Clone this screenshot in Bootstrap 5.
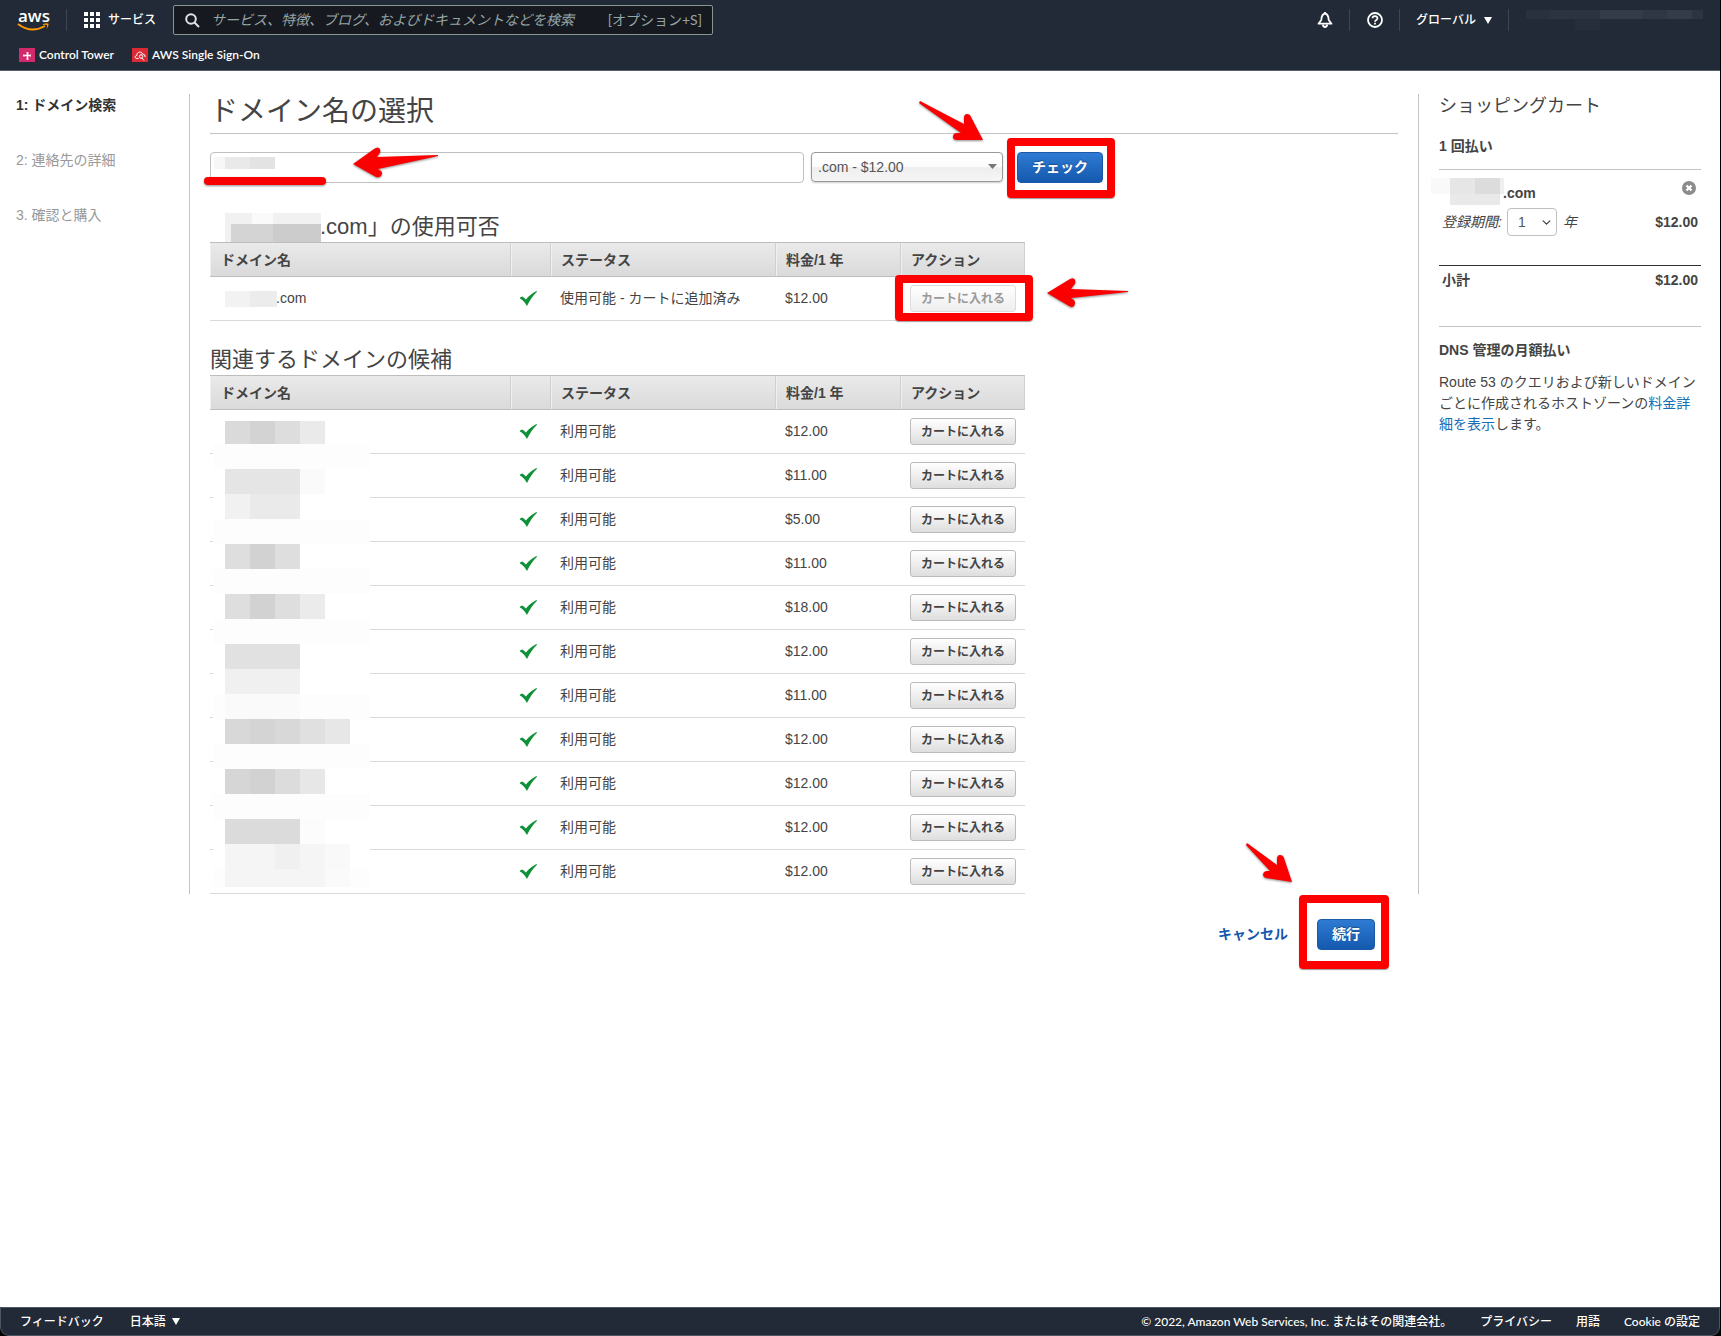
<!DOCTYPE html>
<html lang="ja">
<head>
<meta charset="utf-8">
<meta name="viewport" content="width=device-width, initial-scale=1">
<title>Route 53 - ドメイン名の選択</title>
<link href="https://cdn.jsdelivr.net/npm/bootstrap@5.3.0/dist/css/bootstrap.min.css" rel="stylesheet">
<style>
:root { --navy:#212a36; --red:#fe0000; --ink:#444; --rule:#c4c4c4; }
body { font:14px/21px "Liberation Sans","Noto Sans CJK JP",sans-serif; color:var(--ink); background:#fff; border-right:1px solid #000; }
a { text-decoration:none; }
.topbar, .bottombar { background:var(--navy); color:#fff; font-family:Lato,"Noto Sans CJK JP",sans-serif; font-weight:600; font-size:12px; line-height:18px; }
.topbar { border-bottom:1px solid #56606c; }
.topbar a, .bottombar a, .topbar button, .bottombar button { color:#fff; }
.topbar .jp, .bottombar .jp { font-weight:500; }
.toprow { height:40px; }
.favrow { height:30px; padding-left:19px; gap:18px; }
.plain { background:none; border:0; padding:0; font:inherit; }
.vsep { width:1px; height:22px; background:#3d4752; }
.svc { gap:8px; padding:0 17px; }
.searchbox { width:540px; height:30px; background:#16191f; border:1px solid #879596; border-radius:2px; padding:0 10px 0 11px; color:#95a5a6; font-size:14px; font-weight:400; }
.searchbox input { background:none; border:0; outline:0; color:inherit; min-width:0; padding:0 0 0 11px; }
.searchbox input::placeholder { color:#95a5a6; font-style:italic; opacity:1; }
.caret { width:0; height:0; border:4px solid transparent; border-top:7px solid #fff; border-bottom:0; }
.logo { overflow:visible; }
.steps { width:189px; padding:24px 16px 0; }
.steps li { margin-bottom:34px; color:#999; }
.steps li.now { color:#333; font-weight:700; }
.mainpane { border-left:1px solid var(--rule); padding:0 20px; height:800px; }
.mainwrap { padding-top:23px; }
h1 { font-size:28px; line-height:34px; margin:0 0 18px; padding:1px 0 4px; border-bottom:1px solid var(--rule); font-weight:400; }
h2 { font-size:22px; line-height:34px; height:32px; margin:0; font-weight:400; }
.searchform { width:893px; height:31px; margin-bottom:27px; }
.searchform input { height:31px; border:1px solid #c0c0c0; border-radius:4px; margin-right:7px; }
.tld { width:192px; height:30px; border:1px solid #999; border-radius:4px; padding:0 6px; color:#555; font-size:14px; margin-right:14px;
  background:url("data:image/svg+xml,%3Csvg xmlns='http://www.w3.org/2000/svg' viewBox='0 0 9 5'%3E%3Cpath d='M0 0h9L4.5 5z' fill='%23777'/%3E%3C/svg%3E") no-repeat right 5px top 11px/9px 5px, linear-gradient(#fff 0,#fcfcfc 50%,#eee 52%,#f6f6f6 100%); box-shadow:0 1px 2px rgba(0,0,0,.2); appearance:none; }
.bluebtn { height:31px; padding:0 14px; border:1px solid #1b5aa8; border-radius:4px; background:linear-gradient(#2f7bd3,#1459ae); color:#fff; font-weight:700; font-size:14px; text-shadow:0 -1px 1px rgba(0,0,0,.3); }
.checkbtn { width:86px; }
.gobtn { width:58px; }
.domtable { width:815px; table-layout:fixed; border-collapse:separate; border-spacing:0; margin:0; }
.domtable th { height:35px; padding:0 10px; background:linear-gradient(#eaeaea,#dadada); border-top:1px solid #bdbdbd; border-bottom:1px solid #bdbdbd; border-right:1px solid #d0d0d0; box-shadow:inset 1px 0 #f0f0f0; font-weight:700; line-height:20px; }
.domtable th:first-child { padding-left:11px; }
.domtable td { height:44px; padding:0 9px; border-bottom:1px solid #dadada; vertical-align:middle; }
.domtable td svg { display:block; }
.cartbtn { width:106px; height:27px; padding:0; border:1px solid #bbb; border-radius:3px; background:linear-gradient(#fff,#dedede); color:#444; font-weight:700; font-size:12px; display:block; line-height:24px; }
.cartbtn:disabled { border-color:#ddd; background:linear-gradient(#fff,#eee); color:#999; }
.tablebox { position:relative; width:815px; margin-bottom:22px; }
.mosaic, .note { position:absolute; pointer-events:none; }
.note { overflow:visible; filter:drop-shadow(0 1px 1px rgba(0,0,0,.45)); }
.redbox { position:absolute; border:8px solid var(--red); border-radius:4px; pointer-events:none; box-shadow:0 1px 1px rgba(0,0,0,.4); }
.actions { padding:25px 43px 0 0; gap:29px; }
.actions a { color:#1459ae; font-weight:700; }
.cart { width:302px; padding:0 19px 0 20px; border-left:1px solid var(--rule); height:800px; }
.cart h3 { font-size:18px; line-height:24px; margin:0 0 18px; font-weight:400; }
.cart h4 { font-size:14px; line-height:20px; margin:0; font-weight:700; }
.cartitem { border-top:1px solid var(--rule); margin-top:13px; padding:8px 3px 0; height:96px; }
.cartitem .plain { margin:3px 2px 0 0; }
.cartsum { border-top:1px solid #333; padding:4px 3px 0; height:61px; font-weight:700; }
.cartdns { border-top:1px solid var(--rule); padding-top:13px; }
.cartdns p { margin:12px 0 0; }
.cartdns a { color:#146eb4; }
.years { width:50px; height:28px; border:1px solid #c0c0c0; border-radius:4px; padding:0 0 0 10px; font-size:14px; color:#555; background-position:right 5px center; background-size:9px 9px; margin:0 6px 0 5px; }
.bottomwrap { background:#000; }
.bottombar { height:29px; border:1px solid #4d5763; border-radius:0 0 9px 9px; padding:0 19px; }
.lang { gap:6px; margin-left:26px; }
</style>
</head>
<body class="min-vh-100 d-flex flex-column">
<svg class="d-none" xmlns="http://www.w3.org/2000/svg">
  <symbol id="tick" viewBox="0 0 17 15"><path d="M0 6.500L2.500 5.500 6 8.500Q10 3 16.500 0L17 .8Q11.500 6 7 15 4 9.500 0 7.500z" fill="#0f9138"/></symbol>
</svg>
<header class="topbar">
  <div class="toprow d-flex align-items-center">
    <a href="#" aria-label="AWS" class="d-block ms-3"><svg width="34" height="24" viewBox="0 0 34 24" class="d-block logo"><text x="2" y="14" font-family="Open Sans" font-weight="600" font-size="17" fill="#fff">aws</text><path d="M2 16Q15 26 29 18" fill="none" stroke="#f90" stroke-width="2"/><path d="M27 16Q31 14.500 32.500 15.800 33 18 30.500 21 31.500 18 31 17 29.500 16.500 27 17z" fill="#f90"/></svg></a>
    <span class="vsep ms-3"></span>
    <button class="plain svc d-flex align-items-center jp" type="button"><svg width="16" height="16" fill="#fff"><path d="M0 0h4v4H0zM6 0h4v4H6zM12 0h4v4h-4zM0 6h4v4H0zM6 6h4v4H6zM12 6h4v4h-4zM0 12h4v4H0zM6 12h4v4H6zM12 12h4v4h-4z"/></svg>サービス</button>
    <label class="searchbox d-flex align-items-center"><svg width="15" height="15" viewBox="0 0 15 15" fill="none" stroke="#dfe4e6" stroke-width="2"><circle cx="6" cy="6" r="4.800"/><path d="M9.500 9.500L14 14"/></svg><input type="search" class="flex-fill" placeholder="サービス、特徴、ブログ、およびドキュメントなどを検索" aria-label="検索"><span>[オプション+S]</span></label>
    <div class="d-flex align-items-center ms-auto">
      <button class="plain" type="button" aria-label="通知"><svg class="d-block" width="16" height="16" viewBox="0 0 16 16" fill="none" stroke="#fff" stroke-width="1.800" stroke-linejoin="round"><path d="M8 1.500C5 2 4.500 4 4.300 8L1.500 11.700h13L11.700 8C11.500 4 11 2 8 1.500z"/><path d="M8 0v2" /><path d="M5.800 12.500q.5 2.500 2.200 2.500t2.200-2.500"/></svg></button>
      <span class="vsep ms-3 me-3"></span>
      <button class="plain" type="button" aria-label="ヘルプ"><svg class="d-block" width="17" height="16" viewBox="-1 0 17 16" fill="none" stroke="#fff" stroke-width="1.800"><circle cx="8" cy="8" r="7"/><path d="M5.500 6.300C5.600 3.500 10.500 3.500 10.500 6.200 10.500 8 8 7.800 8 9.800M8 10.800v1.700"/></svg></button>
      <span class="vsep ms-3"></span>
      <button class="plain d-flex align-items-center gap-2 px-3 jp" type="button">グローバル<span class="caret"></span></button>
      <span class="vsep"></span>
      <svg width="211" height="22" class="d-block"><g fill="#2d3441"><path d="M17 1h24v9H17z" fill="#2a313e"/><path d="M41 1h50v9H41z"/><path d="M91 1h92v9H91z" fill="#353c49"/><path d="M133 1h25v9h-25z" fill="#303744"/><path d="M183 1h11v9h-11z"/><path d="M66 10h25v11H66z" fill="#252e3a"/></g></svg>
    </div>
  </div>
  <nav class="favrow d-flex align-items-center">
    <a href="#" class="d-flex align-items-center"><svg width="16" height="14" class="me-1"><path d="M0 0h16v14H0z" fill="#d42a6b"/><path d="M4 7.500h8M8.500 4v8" stroke="#fff" stroke-width="1.500"/><path d="M7 5h3M7 11h3M5 6v3M11.500 6v3" stroke="#ffb8d2" stroke-width=".7"/></svg>Control Tower</a>
    <a href="#" class="d-flex align-items-center"><svg width="16" height="14" class="me-1"><path d="M0 0h16v14H0z" fill="#dc2a35"/><path d="M6.500 10.500H5C2.500 10.500 2.700 7.500 4.800 7.500 4.700 3.500 9.500 3 10.500 6q3 .3 2.700 3" fill="none" stroke="#fff"/><circle cx="9" cy="8.500" r="1.700" fill="none" stroke="#fff"/><path d="M10 10l2 2.500" stroke="#fff"/></svg>AWS Single Sign-On</a>
  </nav>
</header>

<div class="d-flex flex-grow-1">
  <aside class="steps flex-shrink-0"><ol class="list-unstyled m-0"><li class="now">1: ドメイン検索</li><li>2: 連絡先の詳細</li><li>3. 確認と購入</li></ol></aside>
  <main class="mainwrap flex-fill">
    <div class="mainpane">
      <h1>ドメイン名の選択</h1>
      <form class="searchform d-flex position-relative">
        <input type="text" class="flex-fill" aria-label="ドメイン名">
        <select class="tld" aria-label="トップレベルドメイン"><option>.com - $12.00</option></select>
        <button type="button" class="bluebtn checkbtn">チェック</button>
        <svg class="mosaic top-0 start-0" width="80" height="26"><path d="M4 5h11v12H4z" fill="#f7f7f7"/><path d="M15 5h25v12H15z" fill="#e9e9e9"/><path d="M40 5h25v12H40z" fill="#e3e3e3"/></svg>
        <svg class="note top-0 start-0" width="893" height="40" fill="#fb0000">
          <rect x="-6" y="25" width="122" height="8" rx="4"/>
          <path d="M143 12L164 -3q4-3 6 0 1 3-1 5l-2 3 61-2v1l-60 13 3 2q2 2 0 5-2 2-5 1z"/>
          <path d="M709 -49L710 -51 754 -28v-6q0-4 3-4 3 0 4 3L773 -12H747q-4 0-4-3 0-4 4-4h4z"/>
        </svg>
        <div class="redbox" style="left:797px;top:-14px;width:108px;height:60px"></div>
      </form>
      <section class="tablebox">
        <h2 style="padding-left:110px">.com」の使用可否</h2>
        <svg class="mosaic top-0 start-0" width="200" height="97"><path d="M15 3h96v29H15z" fill="#f1f1f1"/><path d="M42 3h21v11H42z" fill="#fafafa"/><path d="M21 14h90v18H21z" fill="#d4d4d4"/><path d="M63 14h48v18H63z" fill="#cccccc"/><path d="M15 81h25v16H15z" fill="#f2f2f2"/><path d="M40 81h27v16H40z" fill="#ececec"/></svg>
        <table class="domtable">
          <colgroup><col style="width:301px"><col style="width:40px"><col style="width:225px"><col style="width:125px"><col></colgroup>
          <thead><tr><th>ドメイン名</th><th></th><th>ステータス</th><th>料金/1 年</th><th>アクション</th></tr></thead>
          <tbody><tr><td style="padding-left:66px">.com</td><td><svg width="17" height="15"><use href="#tick"/></svg></td><td>使用可能 - カートに追加済み</td><td>$12.00</td><td><button class="cartbtn" disabled>カートに入れる</button></td></tr></tbody>
        </table>
        <div class="redbox" style="left:685px;top:65px;width:138px;height:46px"></div>
        <svg class="note top-0 start-0" width="815" height="110" fill="#fb0000"><path d="M837 83L860 69q4-2 5 1 1 3-1 5l-3 4 57 2v1l-57 6 3 2q2 3 0 6-2 2-5 0z"/></svg>
      </section>
      <section class="tablebox">
        <h2>関連するドメインの候補</h2>
        <table class="domtable">
          <colgroup><col style="width:301px"><col style="width:40px"><col style="width:225px"><col style="width:125px"><col></colgroup>
          <thead><tr><th>ドメイン名</th><th></th><th>ステータス</th><th>料金/1 年</th><th>アクション</th></tr></thead>
          <tbody>
            <tr><td></td><td><svg width="17" height="15"><use href="#tick"/></svg></td><td>利用可能</td><td>$12.00</td><td><button class="cartbtn">カートに入れる</button></td></tr>
            <tr><td></td><td><svg width="17" height="15"><use href="#tick"/></svg></td><td>利用可能</td><td>$11.00</td><td><button class="cartbtn">カートに入れる</button></td></tr>
            <tr><td></td><td><svg width="17" height="15"><use href="#tick"/></svg></td><td>利用可能</td><td>$5.00</td><td><button class="cartbtn">カートに入れる</button></td></tr>
            <tr><td></td><td><svg width="17" height="15"><use href="#tick"/></svg></td><td>利用可能</td><td>$11.00</td><td><button class="cartbtn">カートに入れる</button></td></tr>
            <tr><td></td><td><svg width="17" height="15"><use href="#tick"/></svg></td><td>利用可能</td><td>$18.00</td><td><button class="cartbtn">カートに入れる</button></td></tr>
            <tr><td></td><td><svg width="17" height="15"><use href="#tick"/></svg></td><td>利用可能</td><td>$12.00</td><td><button class="cartbtn">カートに入れる</button></td></tr>
            <tr><td></td><td><svg width="17" height="15"><use href="#tick"/></svg></td><td>利用可能</td><td>$11.00</td><td><button class="cartbtn">カートに入れる</button></td></tr>
            <tr><td></td><td><svg width="17" height="15"><use href="#tick"/></svg></td><td>利用可能</td><td>$12.00</td><td><button class="cartbtn">カートに入れる</button></td></tr>
            <tr><td></td><td><svg width="17" height="15"><use href="#tick"/></svg></td><td>利用可能</td><td>$12.00</td><td><button class="cartbtn">カートに入れる</button></td></tr>
            <tr><td></td><td><svg width="17" height="15"><use href="#tick"/></svg></td><td>利用可能</td><td>$12.00</td><td><button class="cartbtn">カートに入れる</button></td></tr>
            <tr><td></td><td><svg width="17" height="15"><use href="#tick"/></svg></td><td>利用可能</td><td>$12.00</td><td><button class="cartbtn">カートに入れる</button></td></tr>
          </tbody>
        </table>
        <svg class="mosaic bottom-0 start-0" width="160" height="473" viewBox="0 421 160 473">
          <path d="M3 421h157v466H3z" fill="#fff"/>
          <path d="M3 444h157v25H3zM3 519h157v25H3zM3 569h157v25H3zM3 619h157v25H3zM3 694h157v25H3zM3 744h157v25H3zM3 794h157v25H3zM3 869h157v18H3z" fill="#fdfdfd"/>
          <path d="M15 421h25v23H15z" fill="#dadada"/><path d="M40 421h25v23H40z" fill="#d3d3d3"/><path d="M65 421h25v23H65z" fill="#dddddd"/><path d="M90 421h25v23H90z" fill="#eaeaea"/>
          <path d="M15 469h75v25H15z" fill="#e5e5e5"/><path d="M90 469h25v25H90z" fill="#fafafa"/>
          <path d="M15 494h25v25H15z" fill="#f1f1f1"/><path d="M40 494h50v25H40z" fill="#eaeaea"/>
          <path d="M15 544h75v25H15z" fill="#dedede"/><path d="M40 544h25v25H40z" fill="#d2d2d2"/>
          <path d="M15 594h75v25H15z" fill="#dedede"/><path d="M40 594h25v25H40z" fill="#d2d2d2"/><path d="M90 594h25v25H90z" fill="#ebebeb"/>
          <path d="M15 644h75v25H15z" fill="#e1e1e1"/><path d="M15 669h75v25H15z" fill="#f0f0f0"/><path d="M15 694h75v25H15z" fill="#fafafa"/>
          <path d="M15 719h75v25H15z" fill="#d8d8d8"/><path d="M40 719h25v25H40z" fill="#d4d4d4"/><path d="M90 719h25v25H90z" fill="#e0e0e0"/><path d="M115 719h25v25h-25z" fill="#e7e7e7"/>
          <path d="M15 769h25v25H15z" fill="#d6d6d6"/><path d="M40 769h25v25H40z" fill="#d2d2d2"/><path d="M65 769h25v25H65z" fill="#dcdcdc"/><path d="M90 769h25v25H90z" fill="#e7e7e7"/>
          <path d="M15 819h75v25H15z" fill="#dbdbdb"/><path d="M90 819h25v25H90z" fill="#fcfcfc"/>
          <path d="M15 844h100v25H15z" fill="#f5f5f5"/><path d="M65 844h25v25H65z" fill="#f0f0f0"/><path d="M115 844h25v25h-25z" fill="#f9f9f9"/>
          <path d="M15 869h100v18H15z" fill="#f5f5f5"/><path d="M115 869h25v18h-25z" fill="#fafafa"/>
        </svg>
      </section>
    </div>
    <div class="actions d-flex justify-content-end align-items-center">
      <a href="#">キャンセル</a>
      <div class="position-relative">
        <button type="button" class="bluebtn gobtn d-block p-0">続行</button>
        <div class="redbox" style="left:-18px;top:-24px;width:90px;height:74px"></div>
        <svg class="note top-0 start-0" width="58" height="31" fill="#fb0000"><path d="M-71-74L-70-76-40-54v-6q0-4 3-4 3 0 4 3L-25-37-51-41q-3-1-3-4 1-3 4-3h3z"/></svg>
      </div>
    </div>
  </main>
  <div class="mainwrap flex-shrink-0">
    <aside class="cart">
      <h3>ショッピングカート</h3>
      <h4>1 回払い</h4>
      <div class="cartitem position-relative">
        <div class="d-flex justify-content-between fw-bold"><span style="padding:5px 0 0 61px">.com</span><button class="plain d-flex" type="button" aria-label="削除"><svg width="14" height="14"><circle cx="7" cy="7" r="7" fill="#8c8c8c"/><path d="M4.500 4.500l5 5M9.500 4.500l-5 5" stroke="#fff" stroke-width="2.400"/></svg></button></div>
        <div class="d-flex align-items-center mt-1"><label for="years" class="fst-italic">登録期間:</label><select id="years" class="form-select years"><option>1</option></select><i>年</i><b class="ms-auto">$12.00</b></div>
        <svg class="mosaic top-0" style="left:-8px" width="80" height="40"><path d="M0 8h19v16H0z" fill="#f9f9f9"/><path d="M19 8h25v16H19z" fill="#e6e6e6"/><path d="M44 8h25v16H44z" fill="#dcdcdc"/><path d="M19 24h50v11H19z" fill="#e9e9e9"/><path d="M69 8h4v16h-4z" fill="#efefef"/></svg>
      </div>
      <div class="cartsum d-flex justify-content-between"><span>小計</span><span>$12.00</span></div>
      <div class="cartdns"><h4>DNS 管理の月額払い</h4><p>Route 53 のクエリおよび新しいドメインごとに作成されるホストゾーンの<a href="#">料金詳細を表示</a>します。</p></div>
    </aside>
  </div>
</div>

<div class="bottomwrap"><footer class="bottombar d-flex align-items-center">
  <a href="#" class="jp">フィードバック</a>
  <button class="plain d-flex align-items-center jp lang" type="button">日本語<span class="caret"></span></button>
  <span class="ms-auto jp">© 2022, Amazon Web Services, Inc. またはその関連会社。</span>
  <a href="#" class="ms-4 ps-1 jp">プライバシー</a><a href="#" class="ms-4 jp">用語</a><a href="#" class="ms-4 jp">Cookie の設定</a>
</footer></div>
<script src="https://cdn.jsdelivr.net/npm/bootstrap@5.3.0/dist/js/bootstrap.bundle.min.js"></script>
</body>
</html>
